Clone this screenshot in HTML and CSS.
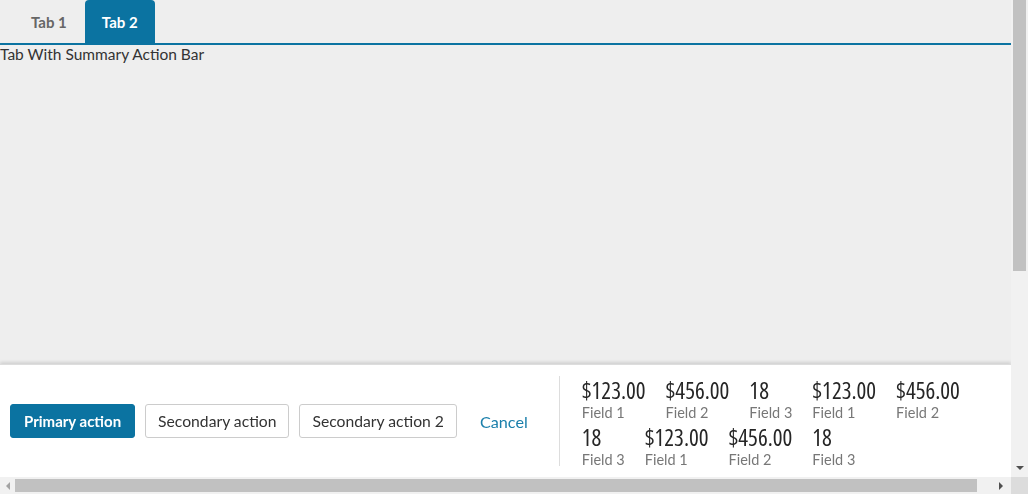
FILE: index.html
```html
<!DOCTYPE html>
<html>
<head>
<meta charset="utf-8">
<link rel="stylesheet" href="styles.css">
</head>
<body>
<div class="page">
  <div class="tabs">
    <div class="tab">Tab 1</div>
    <div class="tab active">Tab 2</div>
  </div>
  <div class="content">Tab With Summary Action Bar</div>
</div>
<div class="bar">
  <div class="actions">
    <button class="btn primary">Primary action</button>
    <button class="btn">Secondary action</button>
    <button class="btn">Secondary action 2</button>
    <a class="link">Cancel</a>
  </div>
  <div class="summary">
    <div class="item"><div class="val">$123.00</div><div class="lbl">Field 1</div></div>
    <div class="item"><div class="val">$456.00</div><div class="lbl">Field 2</div></div>
    <div class="item"><div class="val">18</div><div class="lbl">Field 3</div></div>
    <div class="item"><div class="val">$123.00</div><div class="lbl">Field 1</div></div>
    <div class="item"><div class="val">$456.00</div><div class="lbl">Field 2</div></div>
    <div class="item"><div class="val">18</div><div class="lbl">Field 3</div></div>
    <div class="item"><div class="val">$123.00</div><div class="lbl">Field 1</div></div>
    <div class="item"><div class="val">$456.00</div><div class="lbl">Field 2</div></div>
    <div class="item"><div class="val">18</div><div class="lbl">Field 3</div></div>
  </div>
</div>
<div class="vscroll">
  <div class="vthumb"></div>
  <div class="arrow down"></div>
</div>
<div class="hscroll">
  <div class="arrow left"></div>
  <div class="hthumb"></div>
  <div class="arrow right"></div>
</div>
<div class="corner"></div>
</body>
</html>
```
FILE: styles.css
```css
html, body {
  margin: 0;
  padding: 0;
  background: #eeeeee;
  font-family: Lato, "Noto Sans", sans-serif;
  color: #333333;
  overflow: hidden;
}
.page {
  height: 494px;
}
.tabs {
  display: flex;
  gap: 1px;
  padding-left: 14px;
  height: 43px;
  border-bottom: 2px solid #0b73a1;
}
.tab {
  display: flex;
  align-items: center;
  padding: 0 17px;
  font-weight: 700;
  font-size: 15px;
  color: #666666;
  border-radius: 4px 4px 0 0;
}
.tab.active {
  background: #0b73a1;
  color: #ffffff;
}
.content {
  font-size: 15.5px;
  line-height: 19px;
  color: #333333;
}
.bar {
  position: fixed;
  left: 0;
  right: 17px;
  bottom: 17px;
  height: 112px;
  background: #ffffff;
  border-top: 1px solid #dddddd;
  box-shadow: 0 -2px 3px rgba(0, 0, 0, 0.12);
  display: flex;
  align-items: center;
  padding: 0 0 0 10px;
}
.actions {
  display: flex;
  align-items: center;
  gap: 10px;
  padding-right: 31px;
}
.btn {
  font-family: Lato, "Noto Sans", sans-serif;
  font-size: 15.7px;
  height: 34px;
  padding: 0 12px;
  border: 1px solid #cccccc;
  border-radius: 3px;
  background: #ffffff;
  color: #333333;
}
.btn.primary {
  font-size: 15px;
  padding: 0 13px;
  background: #0b73a1;
  border-color: #0b73a1;
  color: #ffffff;
  font-weight: 700;
}
.link {
  margin-left: 13px;
  font-size: 16.2px;
  color: #1a7fab;
}
.summary {
  flex: 1;
  align-self: stretch;
  margin: 11px 0;
  border-left: 1px solid #dddddd;
  padding: 2px 0 0 22px;
  display: flex;
  flex-wrap: wrap;
  column-gap: 20px;
  row-gap: 3px;
  align-content: flex-start;
}
.item {
  display: flex;
  flex-direction: column;
}
.val {
  font-family: "Open Sans", sans-serif;
  font-stretch: 75%;
  font-size: 23px;
  line-height: 25px;
  color: #262626;
}
.lbl {
  font-size: 14.5px;
  line-height: 19px;
  color: #777777;
}
.vscroll {
  position: fixed;
  top: 0;
  right: 0;
  width: 17px;
  height: 477px;
  background: #f1f1f1;
}
.vthumb {
  margin: 0 2px;
  height: 271px;
  background: #c1c1c1;
}
.hscroll {
  position: fixed;
  left: 0;
  bottom: 0;
  width: 1011px;
  height: 17px;
  background: #f1f1f1;
  display: flex;
  align-items: center;
}
.hthumb {
  margin-left: 5px;
  width: 962px;
  height: 13px;
  background: #c1c1c1;
}
.corner {
  position: fixed;
  right: 0;
  bottom: 0;
  width: 17px;
  height: 17px;
  background: #dcdcdc;
}
.arrow {
  width: 0;
  height: 0;
  border-style: solid;
  border-color: transparent;
}
.arrow.down {
  position: absolute;
  left: 5px;
  bottom: 7px;
  border-width: 4px 4px 0 4px;
  border-top-color: #505050;
}
.arrow.left {
  margin-left: 6px;
  border-width: 4px 4px 4px 0;
  border-right-color: #a3a3a3;
}
.arrow.right {
  margin-left: 22px;
  border-width: 4px 0 4px 4px;
  border-left-color: #505050;
}
```
